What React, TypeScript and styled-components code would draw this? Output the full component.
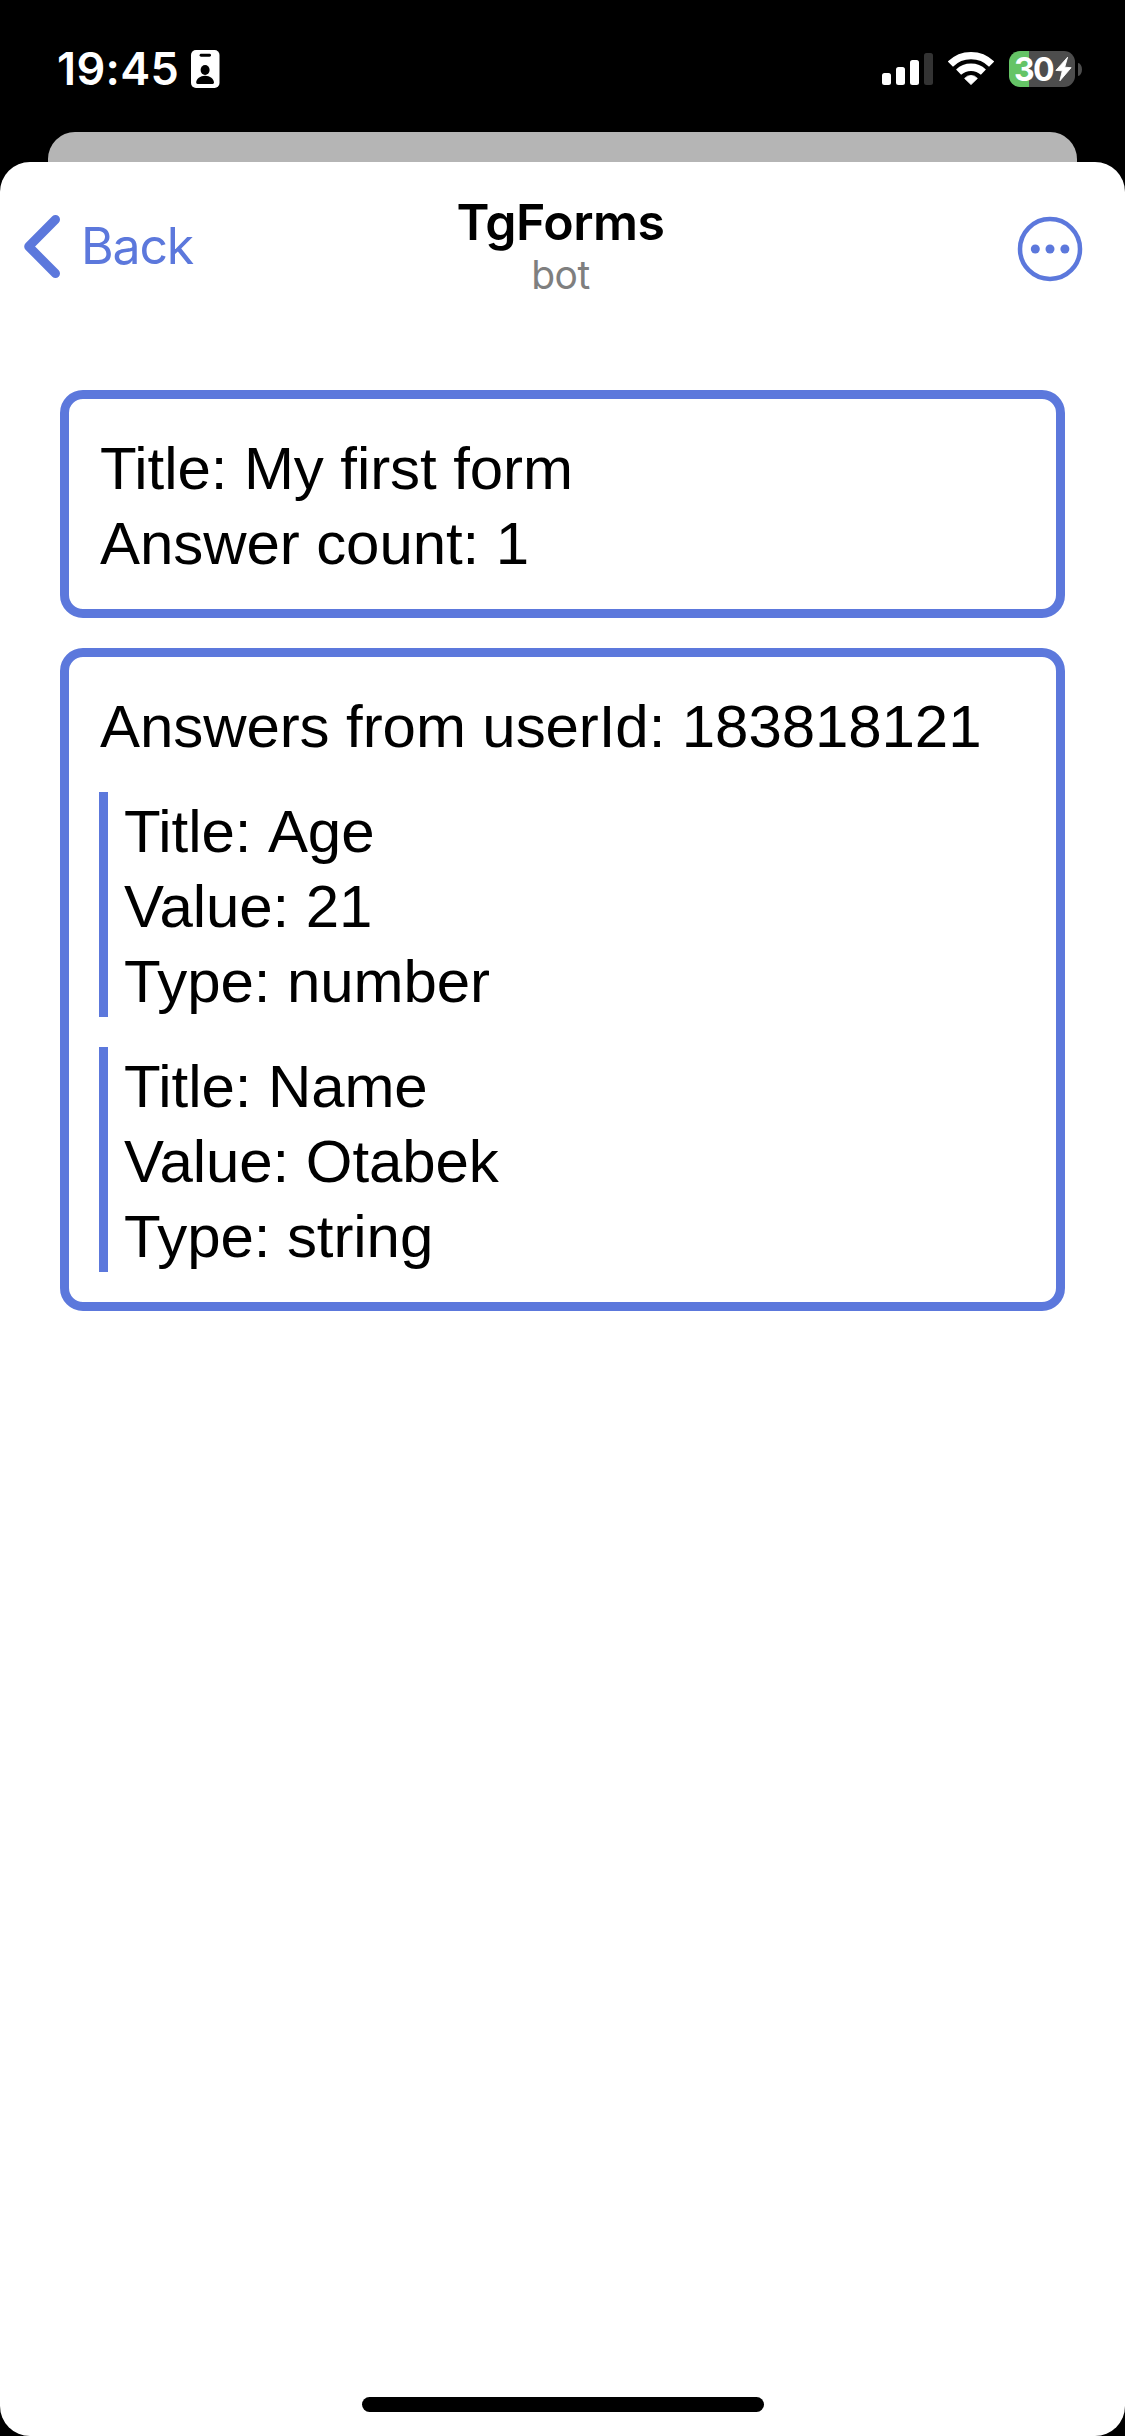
import React from 'react';
import styled, { createGlobalStyle } from 'styled-components';

const accent = '#5c78dc';
const uiFont = "Inter, 'Liberation Sans', sans-serif";
const pageFont = "'Liberation Sans', Arial, sans-serif";

const GlobalStyle = createGlobalStyle`
  * { box-sizing: border-box; }
  html, body { margin: 0; padding: 0; background: #000; }
  svg { display: block; flex: none; }
`;

const Screen = styled.div`
  display: flex;
  flex-direction: column;
  width: 1125px;
  height: 2436px;
  background: #000;
  overflow: hidden;
`;

const StatusBar = styled.header`
  display: flex;
  justify-content: space-between;
  align-items: flex-start;
  flex: none;
  height: 132px;
  padding: 42px 43px 0 57px;
  color: #fff;
  font-family: ${uiFont};
`;

const Clock = styled.div`
  display: flex;
  gap: 12px;
  font-size: 45px;
  font-weight: 600;
  line-height: 54px;
  letter-spacing: 0.35px;

  svg { margin-top: 8px; }
`;

const Indicators = styled.div`
  display: flex;
  align-items: flex-start;
  gap: 15px;
  margin-top: 9px;
`;

const BatteryGroup = styled.div`
  display: flex;
  align-items: center;
  gap: 3px;
`;

const BatteryBody = styled.div<{ $level: number }>`
  display: flex;
  align-items: flex-start;
  width: 66px;
  height: 36px;
  padding-left: 5px;
  border-radius: 11px;
  background: linear-gradient(
    to right,
    #65c466 ${(p) => p.$level}%,
    #4d4d4d ${(p) => p.$level}%
  );
  font-size: 32px;
  font-weight: 700;
  line-height: 37px;
  letter-spacing: -1.6px;

  svg { margin-left: 2px; margin-top: 5px; }
`;

const BatteryTip = styled.div`
  width: 4px;
  height: 13px;
  border-radius: 0 4px 4px 0 / 0 6.5px 6.5px 0;
  background: #4d4d4d;
`;

const PreviousSheet = styled.div`
  flex: none;
  height: 30px;
  margin: 0 48px;
  border-radius: 27px 27px 0 0;
  background: #b5b5b5;
`;

const Sheet = styled.main`
  display: flex;
  flex-direction: column;
  flex: 1;
  border-radius: 30px;
  background: #fff;
`;

const NavBar = styled.nav`
  display: grid;
  grid-template-columns: 1fr auto 1fr;
  align-items: start;
  flex: none;
  height: 228px;
  padding-top: 31px;
  font-family: ${uiFont};
`;

const BackButton = styled.a`
  display: flex;
  gap: 21px;
  margin-top: 22px;
  padding-left: 24px;
  color: ${accent};
  font-size: 50px;
  line-height: 62px;
  letter-spacing: -1.2px;
`;

const Heading = styled.div`
  padding-right: 4px;
  text-align: center;
`;

const Title = styled.h1`
  margin: 0;
  color: #000;
  font-size: 50px;
  font-weight: 600;
  line-height: 58px;
  letter-spacing: -0.5px;
`;

const Subtitle = styled.div`
  color: #7f7f7f;
  font-size: 39px;
  line-height: 47px;
  letter-spacing: -0.5px;
`;

const MenuButton = styled.a`
  justify-self: end;
  margin: 23px 42px 0 0;
`;

const Cards = styled.section`
  display: flex;
  flex-direction: column;
  gap: 30px;
  padding: 0 60px;
`;

const Card = styled.article`
  display: flex;
  flex-direction: column;
  gap: 30px;
  padding: 30px;
  border: 9px solid ${accent};
  border-radius: 23px;
  color: #000;
  font-family: ${pageFont};
  font-size: 60px;
  line-height: 75px;
  letter-spacing: -0.08px;
`;

const Lines = styled.div`
  padding: 2px 0 0 1px;
  margin-bottom: -2px;
  white-space: nowrap;
`;

const Value = styled.span`
  display: inline-block;
`;

const Answer = styled.div`
  padding-left: 15px;
  border-left: 9px solid ${accent};
`;

const HomeIndicator = styled.div`
  align-self: center;
  width: 402px;
  height: 15px;
  margin-top: auto;
  margin-bottom: 24px;
  border-radius: 8px;
  background: #000;
`;

const BadgeIcon = () => (
  <svg width="28.5" height="38" viewBox="0 0 28.5 38">
    <rect width="28.5" height="38" rx="5" fill="#fff" />
    <rect x="8.6" y="3.8" width="11.4" height="2.9" rx="1.4" fill="#000" />
    <ellipse cx="14.1" cy="20" rx="4.5" ry="5" fill="#000" />
    <path d="M5.2 32.6c0-4 4-6.9 8.9-6.9s8.9 2.9 8.9 6.9c0 .9-.5 1.4-1.4 1.4h-15c-.9 0-1.4-.5-1.4-1.4z" fill="#000" />
  </svg>
);

const SignalIcon = () => (
  <svg width="51" height="36" viewBox="0 0 51 36" fill="#fff">
    <rect x="0" y="22" width="9" height="12" rx="2.5" />
    <rect x="14" y="16" width="9" height="18" rx="2.5" />
    <rect x="28" y="9" width="9" height="25" rx="2.5" />
    <rect x="42" y="2" width="9" height="32" rx="2.5" fill="#333" />
  </svg>
);

const WifiIcon = () => (
  <svg width="46" height="36" viewBox="0 0 46 36" fill="none" stroke="#fff" strokeWidth="7.3">
    <path d="M2.4 13.1A29.2 29.2 0 0 1 43.6 13.1" />
    <path d="M10.6 21.2A18 18 0 0 1 35.4 21.2" />
    <path d="M23 33.6L16.6 27.4Q19.2 24.4 23 24.4T29.4 27.4Z" fill="#fff" stroke="#fff" strokeWidth="0.8" strokeLinejoin="round" />
  </svg>
);

const BoltIcon = () => (
  <svg width="17" height="26" viewBox="0 0 17 26">
    <path
      d="M12.6 1.2L.9 14.4L7.3 14.8L4.9 24.8L16.1 11.7L9.7 11.2Z"
      fill="#fff"
      stroke="#fff"
      strokeWidth="0.9"
      strokeLinejoin="round"
    />
  </svg>
);

const ChevronIcon = () => (
  <svg width="36" height="63" viewBox="0 0 36 63">
    <path
      d="M31.5 4.5L4.7 31.5L31.5 58.5"
      fill="none"
      stroke={accent}
      strokeWidth="9"
      strokeLinecap="round"
      strokeLinejoin="round"
    />
  </svg>
);

const MoreIcon = () => (
  <svg width="66" height="66" viewBox="0 0 66 66" fill={accent}>
    <circle cx="33" cy="33" r="30" fill="none" stroke={accent} strokeWidth="4.5" />
    <circle cx="18.3" cy="33" r="4.5" />
    <circle cx="33" cy="33" r="4.5" />
    <circle cx="47.9" cy="33" r="4.5" />
  </svg>
);

const answers = [
  { title: 'Age', value: '21', type: 'number' },
  { title: 'Name', value: 'Otabek', type: 'string' },
];

export default function App() {
  return (
    <>
      <GlobalStyle />
      <Screen>
        <StatusBar>
          <Clock>
            19:45
            <BadgeIcon />
          </Clock>
          <Indicators>
            <SignalIcon />
            <WifiIcon />
            <BatteryGroup>
              <BatteryBody $level={30}>
                30
                <BoltIcon />
              </BatteryBody>
              <BatteryTip />
            </BatteryGroup>
          </Indicators>
        </StatusBar>
        <PreviousSheet />
        <Sheet>
          <NavBar>
            <BackButton>
              <ChevronIcon />
              Back
            </BackButton>
            <Heading>
              <Title>TgForms</Title>
              <Subtitle>bot</Subtitle>
            </Heading>
            <MenuButton>
              <MoreIcon />
            </MenuButton>
          </NavBar>
          <Cards>
            <Card>
              <Lines>
                <div>Title: <Value>My first form</Value></div>
                <div>Answer count: <Value>1</Value></div>
              </Lines>
            </Card>
            <Card>
              <Lines>Answers from userId: <Value>183818121</Value></Lines>
              {answers.map((a) => (
                <Answer key={a.title}>
                  <Lines>
                    <div>Title: <Value>{a.title}</Value></div>
                    <div>Value: <Value>{a.value}</Value></div>
                    <div>Type: <Value>{a.type}</Value></div>
                  </Lines>
                </Answer>
              ))}
            </Card>
          </Cards>
          <HomeIndicator />
        </Sheet>
      </Screen>
    </>
  );
}
